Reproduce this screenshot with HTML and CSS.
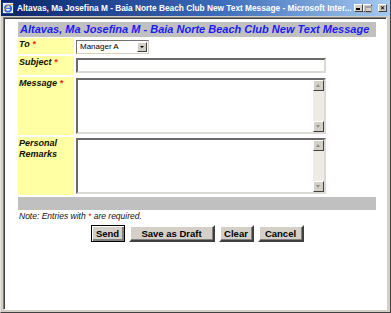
FILE: index.html
```html
<!DOCTYPE html>
<html lang="en">
<head>
    <meta charset="UTF-8">
    <title>New Text Message</title>
    <link rel="stylesheet" href="styles.css">
</head>
<body>

    <div class="window">
        <div class="titlebar">
            <svg class="app-icon" width="12" height="12" viewBox="0 0 12 12">
                <rect x="0.5" y="0.5" width="11" height="11" fill="#e8f0fc" stroke="#1e3c8c"/>
                <circle cx="6" cy="6.5" r="3.2" fill="none" stroke="#2a62d8" stroke-width="1.6"/>
                <line x1="3" y1="6.3" x2="9" y2="6.3" stroke="#2a62d8" stroke-width="1.2"/>
                <path d="M1.5 9 Q6 1 11 2.5" fill="none" stroke="#f0b020" stroke-width="1"/>
            </svg>
            <span class="title">Altavas, Ma Josefina M - Baia Norte Beach Club New Text Message - Microsoft Inter...</span>
            <div class="caption-btns">
                <span class="cbtn cbtn-min"></span>
                <span class="cbtn cbtn-max"></span>
                <span class="cbtn cbtn-close">&#x2715;</span>
            </div>
        </div>

        <div class="client">
            <div class="form">
                <div class="heading">Altavas, Ma Josefina M - Baia Norte Beach Club New Text Message</div>

                <div class="row row-to">
                    <div class="label">To <span class="req">*</span></div>
                    <div class="field">
                        <div class="select">
                            <span>Manager A</span>
                            <span class="drop"></span>
                        </div>
                    </div>
                </div>

                <div class="row row-subject">
                    <div class="label">Subject <span class="req">*</span></div>
                    <div class="field">
                        <input class="textbox" type="text">
                    </div>
                </div>

                <div class="row row-area">
                    <div class="label">Message <span class="req">*</span></div>
                    <div class="field">
                        <div class="areabox">
                            <textarea></textarea>
                            <div class="scrollbar">
                                <span class="sb-btn sb-up"></span>
                                <span class="sb-track"></span>
                                <span class="sb-btn sb-down"></span>
                            </div>
                        </div>
                    </div>
                </div>

                <div class="row row-area">
                    <div class="label">Personal Remarks</div>
                    <div class="field">
                        <div class="areabox">
                            <textarea></textarea>
                            <div class="scrollbar">
                                <span class="sb-btn sb-up"></span>
                                <span class="sb-track"></span>
                                <span class="sb-btn sb-down"></span>
                            </div>
                        </div>
                    </div>
                </div>

                <div class="bar"></div>

                <p class="note">Note: Entries with <span class="req">*</span> are required.</p>

                <div class="buttons">
                    <button class="btn btn-send">Send</button>
                    <button class="btn btn-draft">Save as Draft</button>
                    <button class="btn btn-clear">Clear</button>
                    <button class="btn btn-cancel">Cancel</button>
                </div>
            </div>
        </div>
    </div>

</body>
</html>
```

FILE: styles.css
```css
* {
    margin: 0;
    padding: 0;
    box-sizing: border-box;
}

body {
    width: 391px;
    height: 313px;
    overflow: hidden;
    background-color: #d4d0c8;
    font-family: 'Liberation Sans', Arial, sans-serif;
}

.window {
    height: 313px;
    display: flex;
    flex-direction: column;
    border-left: 1px solid #e6e3dc;
    border-right: 1px solid #404040;
    border-bottom: 1px solid #404040;
}

/* title bar */
.titlebar {
    height: 16px;
    display: flex;
    align-items: center;
    padding: 0 2px 0 1px;
    background: linear-gradient(to right, #0a246a, #3a6ab8 55%, #a6caf0);
}

.app-icon {
    flex-shrink: 0;
}

.title {
    margin-left: 3px;
    color: #ffffff;
    font-size: 8.3px;
    font-weight: bold;
    white-space: nowrap;
    overflow: hidden;
    flex: 1;
}

.caption-btns {
    display: flex;
    align-items: center;
    margin-right: 1px;
}

.cbtn {
    width: 9px;
    height: 8px;
    background-color: #d4d0c8;
    border: 1px solid;
    border-color: #ffffff #404040 #404040 #ffffff;
    position: relative;
    font-size: 6px;
    font-weight: bold;
    line-height: 6px;
    text-align: center;
    color: #000;
}

.cbtn-min::after {
    content: "";
    position: absolute;
    left: 1px;
    bottom: 1px;
    width: 4px;
    height: 2px;
    background-color: #000;
}

.cbtn-max::after {
    content: "";
    position: absolute;
    left: 1px;
    top: 1px;
    width: 5px;
    height: 4px;
    border: 1px solid #a0a0a0;
    border-top-width: 2px;
}

.cbtn-close {
    margin-left: 6px;
}

/* client area */
.client {
    flex: 1;
    margin: 1px 3px 2px 2px;
    background-color: #ffffff;
    border: 1px solid;
    border-color: #808080 #ffffff #ffffff #808080;
    box-shadow: inset 1px 1px 0 #404040;
}

.form {
    width: 358px;
    margin: 4px 0 0 14px;
    display: flex;
    flex-direction: column;
    gap: 2px;
}

.heading {
    height: 15px;
    margin-bottom: -1px;
    padding-left: 2px;
    background-color: #c0c0c0;
    color: #1c1cf0;
    font-size: 11px;
    font-weight: bold;
    font-style: italic;
    line-height: 15px;
    white-space: nowrap;
}

.row {
    display: flex;
    gap: 2px;
}

.row-to {
    height: 16px;
}

.row-subject {
    height: 19px;
}

.row-area {
    height: 58px;
}

.label {
    width: 56px;
    flex-shrink: 0;
    padding: 1px 0 0 1px;
    background-color: #ffffa3;
    color: #111100;
    font-size: 9px;
    font-weight: bold;
    font-style: italic;
    line-height: 11px;
}

.req {
    color: #ee2222;
}

.field {
    flex: 1;
    display: flex;
    align-items: center;
}

.row-area .field {
    align-items: flex-start;
    padding-top: 1px;
}

.select {
    width: 73px;
    height: 14px;
    margin-top: 1px;
    display: flex;
    align-items: center;
    justify-content: space-between;
    padding: 0 1px 0 3px;
    border: 1px solid;
    border-color: #707070 #d4d0c8 #d4d0c8 #707070;
    font-size: 8px;
    color: #000;
}

.drop {
    width: 10px;
    height: 10px;
    background-color: #d4d0c8;
    border: 1px solid;
    border-color: #ffffff #404040 #404040 #ffffff;
    position: relative;
}

.drop::after {
    content: "";
    position: absolute;
    left: 2px;
    top: 3px;
    border-left: 2px solid transparent;
    border-right: 2px solid transparent;
    border-top: 2px solid #000;
}

.textbox {
    width: 250px;
    height: 15px;
    border: 2px solid;
    border-color: #6a6a6a #dcdad4 #dcdad4 #6a6a6a;
    outline: none;
}

.areabox {
    width: 250px;
    height: 56px;
    display: flex;
    border: 2px solid;
    border-color: #6a6a6a #dcdad4 #dcdad4 #6a6a6a;
}

.areabox textarea {
    flex: 1;
    border: none;
    resize: none;
    outline: none;
}

.scrollbar {
    width: 11px;
    display: flex;
    flex-direction: column;
}

.sb-btn {
    height: 11px;
    background-color: #d4d0c8;
    border: 1px solid;
    border-color: #ffffff #404040 #404040 #ffffff;
    position: relative;
}

.sb-btn::after {
    content: "";
    position: absolute;
    left: 2px;
    top: 3px;
    border-left: 2.5px solid transparent;
    border-right: 2.5px solid transparent;
}

.sb-up::after {
    border-bottom: 3px solid #909090;
}

.sb-down::after {
    border-top: 3px solid #909090;
}

.sb-track {
    flex: 1;
    background-color: #ecebe6;
}

.bar {
    height: 13px;
    background-color: #c0c0c0;
}

.note {
    margin-top: -1px;
    padding-left: 1px;
    font-size: 8.5px;
    font-style: italic;
    color: #111;
    line-height: 11px;
}

.buttons {
    display: flex;
    justify-content: center;
    gap: 4px;
    margin-top: 1px;
}

.btn {
    height: 17px;
    background-color: #d4d0c8;
    border: 2px solid;
    border-color: #ffffff #404040 #404040 #ffffff;
    box-shadow: inset -1px -1px 0 #808080;
    font-family: 'Liberation Sans', Arial, sans-serif;
    font-size: 9.5px;
    font-weight: bold;
    color: #000;
}

.btn-send {
    width: 34px;
    border: 1px solid #000;
    box-shadow: inset 1px 1px 0 #ffffff, inset -2px -2px 0 #808080;
}

.btn-draft {
    width: 86px;
}

.btn-clear {
    width: 35px;
}

.btn-cancel {
    width: 46px;
}
```
